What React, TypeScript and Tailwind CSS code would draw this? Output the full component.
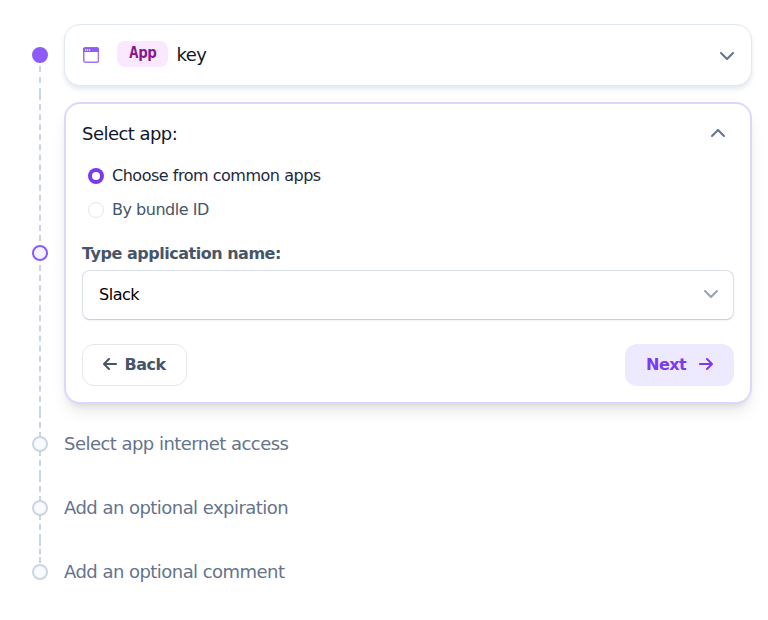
import React from "react";
import { FaArrowLeft, FaArrowRight, FaChevronDown, FaChevronUp } from "react-icons/fa6";

type DotState = "done" | "active" | "todo";

const dotStyles: Record<DotState, string> = {
  done: "border-[#8b5cf6] bg-[#8b5cf6]",
  active: "border-[#8b5cf6] bg-[#f5f3ff]",
  todo: "border-[#cbd5e1] bg-[#f8fafc]",
};

function Step({
  state,
  above = "",
  below = "",
  children,
}: {
  state: DotState;
  above?: string;
  below?: string;
  children: React.ReactNode;
}) {
  return (
    <div className="flex gap-4">
      <div className="-my-2 flex w-4 shrink-0 flex-col items-center">
        <div className="flex w-full flex-1 flex-col items-center">
          {above && <div className={`w-0 flex-1 border-l-2 border-dashed border-[#cbd5e1] ${above}`} />}
        </div>
        <div className={`z-10 size-4 shrink-0 rounded-full border-2 ${dotStyles[state]}`} />
        <div className="flex w-full flex-1 flex-col items-center">
          {below && <div className={`w-0 flex-1 border-l-2 border-dashed border-[#cbd5e1] ${below}`} />}
        </div>
      </div>
      <div className="min-w-0 flex-1">{children}</div>
    </div>
  );
}

function WindowIcon() {
  return (
    <svg viewBox="0 0 16 16" className="size-4 text-[#8b5cf6]" fill="none">
      <rect x="0.75" y="0.75" width="14.7" height="14.4" rx="1.6" stroke="currentColor" strokeWidth="1.5" strokeOpacity="0.85" />
      <path d="M0.1 5V2.2A1.8 1.8 0 0 1 1.9 0.4h12.2a1.8 1.8 0 0 1 1.8 1.8V5Z" fill="currentColor" />
      <path d="M2 2h1.2v2H2zM4 2h1.2v2H4zM6 2h1.2v2H6z" fill="#ddd0fd" />
    </svg>
  );
}

function Radio({ label, checked = false }: { label: string; checked?: boolean }) {
  return (
    <label className={`flex items-center gap-2 leading-6 ${checked ? "text-[#1e293b]" : "text-[#475569]"}`}>
      <input type="radio" name="source" defaultChecked={checked} className="peer sr-only" />
      <span
        className={`flex size-4 items-center justify-center rounded-full ${checked ? "bg-[#7c3aed]" : "border border-gray-200 bg-white"}`}
      >
        {checked && <span className="size-2 rounded-full bg-white" />}
      </span>
      {label}
    </label>
  );
}

export default function App() {
  return (
    <main className="flex h-[620px] flex-col gap-4 bg-white pt-6 pr-4 pl-8 font-['DejaVu_Sans',sans-serif] text-base tracking-[-0.03em]">
      <Step state="done" below="mt-[3px]">
        <div className="flex h-[62px] items-center rounded-2xl border border-[#e2e8f0] bg-white pr-4 pl-[18px] shadow-md shadow-[#e2e8f0]">
          <WindowIcon />
          <span className="mb-0.5 ml-[18px] flex h-[26px] items-center rounded-lg bg-[#fae8ff] px-3 pb-0.5 font-['DejaVu_Sans_Mono',monospace] font-bold text-[#86198f]">
            App
          </span>
          <span className="ml-2 text-lg tracking-[-0.03em] text-[#0f172a]">key</span>
          <FaChevronDown className="ml-auto size-4 text-[#64748b]" />
        </div>
      </Step>

      <Step state="active" above="mb-1" below="mt-1">
        <section className="h-[302px] rounded-2xl border-2 border-[#ddd6fe] bg-white px-4 pt-4 shadow-lg">
          <header className="flex h-7 items-center justify-between pr-2">
            <h2 className="text-lg tracking-[-0.03em] text-[#0f172a]">Select app:</h2>
            <FaChevronUp className="size-4 text-[#64748b]" />
          </header>
          <div className="mt-4 flex flex-col gap-2.5 pl-1.5">
            <Radio label="Choose from common apps" checked />
            <Radio label="By bundle ID" />
          </div>
          <h3 className="mt-5 leading-6 font-bold text-[#475569]">Type application name:</h3>
          <button className="mt-1 flex h-[50px] w-full items-center justify-between rounded-lg border border-[#dbe1ec] border-b-[#cbced9] bg-white pr-3.5 pl-4 tracking-[-0.03em] text-black shadow-xs">
            Slack
            <FaChevronDown className="mb-1 size-4 text-[#94a3b8]" />
          </button>
          <div className="mt-6 flex justify-between">
            <button className="flex h-[42px] w-[105px] items-center gap-[7.5px] rounded-xl border border-gray-200 pl-5 font-bold tracking-[-0.03em] text-[#475569]">
              <FaArrowLeft className="mb-0.5 h-4 w-3.5" />
              Back
            </button>
            <button className="flex h-[42px] w-[109px] items-center justify-between rounded-xl bg-[#ede9fe] pr-[21px] pl-[21px] font-bold tracking-[-0.03em] text-[#7c3aed]">
              Next
              <FaArrowRight className="mb-0.5 h-4 w-3.5" />
            </button>
          </div>
        </section>
      </Step>

      <Step state="todo" above="-mb-0.5" below="-mt-0.5">
        <p className="text-lg leading-[48px] tracking-[-0.03em] text-[#64748b]">Select app internet access</p>
      </Step>
      <Step state="todo" above="-mb-0.5" below="-mt-0.5">
        <p className="text-lg leading-[48px] tracking-[-0.03em] text-[#64748b]">Add an optional expiration</p>
      </Step>
      <Step state="todo" above="mb-px">
        <p className="text-lg leading-[48px] tracking-[-0.03em] text-[#64748b]">Add an optional comment</p>
      </Step>
    </main>
  );
}
